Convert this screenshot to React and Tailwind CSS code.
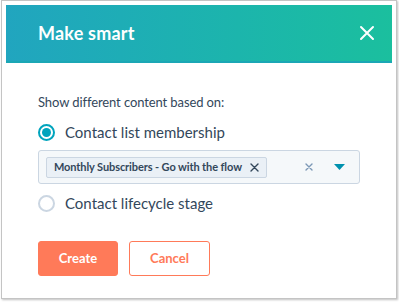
import React from 'react';

const font = { fontFamily: 'Lato, "Open Sans", sans-serif' };

const Radio = ({ checked, label }) => (
  <label className="flex items-center h-[20px]">
    <span
      className={
        checked
          ? 'w-[17px] h-[17px] rounded-full border-2 border-[#00a4bd] bg-white flex items-center justify-center'
          : 'w-[17px] h-[17px] rounded-full border-2 border-[#cbd6e2] bg-white'
      }
    >
      {checked && <span className="w-[9px] h-[9px] rounded-full bg-[#00a4bd]" />}
    </span>
    <span className="ml-[10px] text-[15px] text-[#33475b]">{label}</span>
  </label>
);

const App = () => {
  return (
    <div className="w-[399px] h-[302px] bg-white" style={font}>
      <div className="ml-[1px] w-[396px] h-[299px] border border-[#c4c4c4] shadow-[1px_1px_2px_rgba(0,0,0,0.25)] pt-[4px] pl-[4px] pr-[3px]">
        <div className="w-[386px] h-[58px] bg-gradient-to-r from-[#21a5bf] to-[#1bbf9e] border-b-2 border-[#1ba7b5] flex items-center justify-between pl-[32px] pr-[17px]">
          <h1 className="text-white font-bold text-[18px] tracking-[0.2px]">Make smart</h1>
          <svg width="16" height="16" viewBox="0 0 16 16" fill="none" stroke="white" strokeWidth="2" strokeLinecap="round">
            <path d="M2 2L14 14M14 2L2 14" />
          </svg>
        </div>
        <div className="pl-[32px] pt-[30px]">
          <p className="text-[13px] text-[#33475b] leading-[18px] tracking-[-0.1px]">Show different content based on:</p>
          <div className="mt-[11px]">
            <Radio checked label="Contact list membership" />
          </div>
          <div className="mt-[8px] w-[322px] h-[34px] bg-[#f5f8fa] border border-[#cbd6e2] rounded-[3px] flex items-center pl-[7px] pr-[14px]">
            <span className="h-[21px] bg-[#eaf0f6] border border-[#cbd6e2] rounded-[2px] flex items-center pl-[7px] pr-[7px] text-[11px] font-bold text-[#33475b] tracking-[-0.1px]">
              Monthly Subscribers - Go with the flow
              <svg className="ml-[8px]" width="9" height="9" viewBox="0 0 9 9" stroke="#33475b" strokeWidth="1.4" strokeLinecap="round">
                <path d="M1 1L8 8M8 1L1 8" />
              </svg>
            </span>
            <svg className="ml-auto" width="8" height="8" viewBox="0 0 8 8" stroke="#7c98b6" strokeWidth="1.4" strokeLinecap="round">
              <path d="M1 1L7 7M7 1L1 7" />
            </svg>
            <svg className="ml-[21px]" width="11" height="6" viewBox="0 0 11 6" fill="#0091ae">
              <path d="M0 0H11L5.5 6Z" />
            </svg>
          </div>
          <div className="mt-[9px]">
            <Radio label="Contact lifecycle stage" />
          </div>
          <div className="mt-[28px] flex gap-[11px]">
            <button className="w-[80px] h-[35px] bg-[#ff7a59] border border-[#ff7a59] rounded-[3px] text-white font-bold text-[13px]">
              Create
            </button>
            <button className="w-[81px] h-[35px] bg-white border border-[#ff7a59] rounded-[3px] text-[#ff7a59] font-bold text-[13px]">
              Cancel
            </button>
          </div>
        </div>
      </div>
    </div>
  );
};

export default App;
